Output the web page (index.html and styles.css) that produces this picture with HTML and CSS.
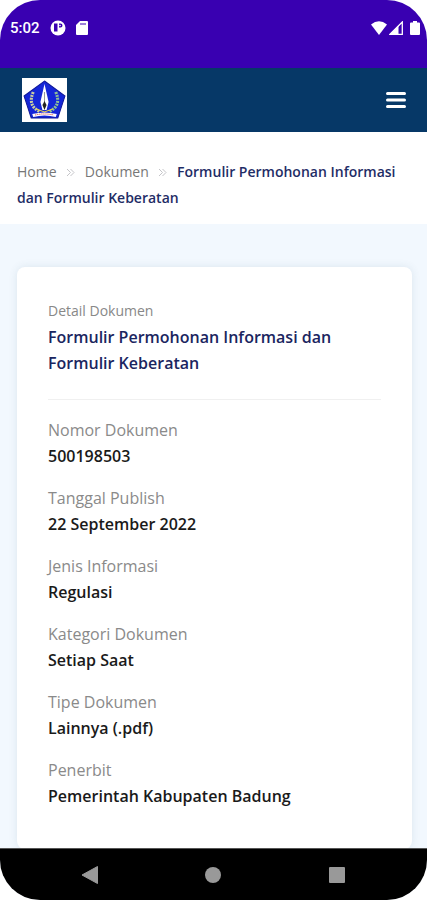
FILE: index.html
```html
<!DOCTYPE html>
<html lang="id">
<head>
  <meta charset="UTF-8">
  <meta name="viewport" content="width=device-width, initial-scale=1">
  <title>Formulir Permohonan Informasi dan Formulir Keberatan</title>
  <link rel="stylesheet" href="styles.css">
</head>
<body>
  <div class="screen">
    <div class="status-bar">
      <span class="clock">5:02</span>
      <svg width="16" height="16" viewBox="0 0 16 16">
        <circle cx="8" cy="8" r="7.5" fill="#fff"/>
        <path d="M4 3.500h3.500v8H4zM9 3.500h1.500q2 0 2 2t-2 2H9z" fill="#3900b1"/>
        <circle cx="10" cy="5.500" r="0.800" fill="#fff"/>
      </svg>
      <svg width="12" height="14" viewBox="0 0 12 14">
        <path d="M4 0h7q1 0 1 1v12q0 1-1 1H1q-1 0-1-1V4z" fill="#fff"/>
        <path d="M5 2v2M7 2v2M9 2v2" stroke="#3900b1" stroke-width="1"/>
      </svg>
      <div class="signals">
        <svg width="16" height="14" viewBox="0 0 16 14">
          <path d="M0 3.500Q8-3 16 3.500L8 14z" fill="#fff"/>
        </svg>
        <svg width="14" height="14" viewBox="0 0 14 14">
          <path d="M1 13.300L13.300 1v12.300z" fill="none" stroke="#fff" stroke-width="1.300"/>
          <path d="M1 13.500L9.500 4.500v9z" fill="#fff"/>
        </svg>
        <svg class="battery" width="10" height="14" viewBox="0 0 10 14">
          <path d="M3 0h4v1.500h2q1 0 1 1V13q0 1-1 1H1q-1 0-1-1V2.500q0-1 1-1h2z" fill="#fff"/>
        </svg>
      </div>
    </div>

    <header class="header">
      <a href="#" class="logo" aria-label="Beranda">
        <svg width="45" height="44" viewBox="0 0 44 44" preserveAspectRatio="none">
          <rect width="44" height="44" fill="#fff"/>
          <path d="M22 3L42 18 35 40H9L2 18z" fill="#1526d8" stroke="#101a9a"/>
          <path d="M11 14Q5 28 18 34" fill="none" stroke="#c9cda0" stroke-width="3" stroke-dasharray="2 1"/>
          <path d="M33 14Q39 28 26 34" fill="none" stroke="#8fbf96" stroke-width="3" stroke-dasharray="2 1"/>
          <path d="M22 6L26 24 24 32H20L18 24z" fill="#fff"/>
          <path d="M22 14v10" stroke="#999" stroke-width="1"/>
          <path d="M22 23l2 4-2 5-2-5z" fill="#222"/>
          <path d="M14 31l8 3 8-3" fill="none" stroke="#e8d44a" stroke-width="1"/>
          <path d="M10 36q12-3 24 0l-1 3q-11-3-22 0z" fill="#fff"/>
          <path d="M13 37q9-2 18 0" fill="none" stroke="#c33" stroke-width="1" stroke-dasharray="1 1"/>
        </svg>
      </a>
      <button type="button" class="menu-btn" aria-label="Menu">
        <svg width="20" height="18" viewBox="0 0 20 18">
          <path d="M1.500 2.500h17M1.500 9h17M1.500 15.500h17" stroke="#fff" stroke-width="3" stroke-linecap="round"/>
        </svg>
      </button>
    </header>

    <nav class="breadcrumb">
      <a href="#">Home</a>
      <svg class="sep" width="9" height="9" viewBox="0 0 9 9"><path d="M1 1l3.500 3.500L1 8M4.500 1L8 4.500 4.500 8"/></svg>
      <a href="#">Dokumen</a>
      <svg class="sep" width="9" height="9" viewBox="0 0 9 9"><path d="M1 1l3.500 3.500L1 8M4.500 1L8 4.500 4.500 8"/></svg>
      <span class="current">Formulir Permohonan Informasi dan Formulir Keberatan</span>
    </nav>

    <main class="content">
      <div class="card">
        <div class="card-title">
          <p>Detail Dokumen</p>
          <h1>Formulir Permohonan Informasi dan Formulir Keberatan</h1>
        </div>
        <dl class="detail">
          <div>
            <dt>Nomor Dokumen</dt>
            <dd>500198503</dd>
          </div>
          <div>
            <dt>Tanggal Publish</dt>
            <dd>22 September 2022</dd>
          </div>
          <div>
            <dt>Jenis Informasi</dt>
            <dd>Regulasi</dd>
          </div>
          <div>
            <dt>Kategori Dokumen</dt>
            <dd>Setiap Saat</dd>
          </div>
          <div>
            <dt>Tipe Dokumen</dt>
            <dd>Lainnya (.pdf)</dd>
          </div>
          <div>
            <dt>Penerbit</dt>
            <dd>Pemerintah Kabupaten Badung</dd>
          </div>
        </dl>
      </div>
    </main>

    <div class="nav-bar">
      <button type="button" aria-label="Kembali">
        <svg width="18" height="20" viewBox="0 0 18 20"><path d="M1 10L16.500 1.500v17z" fill="#999" stroke="#999" stroke-linejoin="round"/></svg>
      </button>
      <button type="button" aria-label="Layar utama">
        <svg width="18" height="18" viewBox="0 0 18 18"><circle cx="9" cy="9" r="8" fill="#999"/></svg>
      </button>
      <button type="button" aria-label="Aplikasi terbaru">
        <svg width="18" height="18" viewBox="0 0 18 18"><rect x="1" y="1" width="16" height="16" rx="1" fill="#999"/></svg>
      </button>
    </div>
  </div>
</body>
</html>
```
FILE: styles.css
```css
* { box-sizing: border-box; }
body { margin: 0; background: #fff; font-family: "Open Sans", sans-serif; line-height: 26px; }
p, h1, dl, dd { margin: 0; }
a { color: inherit; text-decoration: none; }
button { padding: 0; border: 0; background: none; cursor: pointer; }
svg { display: block; }

.screen { display: flex; flex-direction: column; height: 100vh; border-radius: 40px; overflow: hidden; background: #f2f8fe; }

.status-bar { display: flex; align-items: center; flex: none; height: 68px; padding: 0 7px 13px 10px; gap: 10px; background: #3900b1; color: #fff; }
.clock { font-family: Roboto, sans-serif; font-size: 15px; font-weight: 500; }
.signals { display: flex; gap: 2px; margin-left: auto; }
.battery { margin-left: 5px; }

.header { display: flex; align-items: center; justify-content: space-between; flex: none; height: 64px; padding: 0 21px 0 22px; background: #063867; }

.breadcrumb { flex: none; padding: 27px 17px 13px; background: #fff; color: #777; font-size: 14px; }
.breadcrumb .sep { display: inline-block; margin: 0 6px; fill: none; stroke: #c4c4c8; }
.breadcrumb .current { color: #1f2d66; font-weight: 600; }

.content { flex: 1; min-height: 0; padding: 43px 15px 0 17px; overflow: hidden; }
.card { padding: 31px 31px 40px; border-radius: 8px; background: #fff; box-shadow: 0 0 8px rgba(60, 100, 120, 0.12); }
.card-title { padding-bottom: 23px; border-bottom: 1px solid #f0f0f0; color: #888; font-size: 14px; }
.card-title h1 { color: #1a2560; font-size: 16px; font-weight: 600; }
.detail { display: flex; flex-direction: column; gap: 16px; padding-top: 17px; font-size: 16px; }
.detail dt { color: #8a8a8a; }
.detail dd { color: #1a1a1a; font-weight: 600; }

.nav-bar { display: flex; align-items: center; justify-content: space-around; flex: none; height: 52px; padding: 0 28px; border-top: 1px solid #555; background: #000; }
```
